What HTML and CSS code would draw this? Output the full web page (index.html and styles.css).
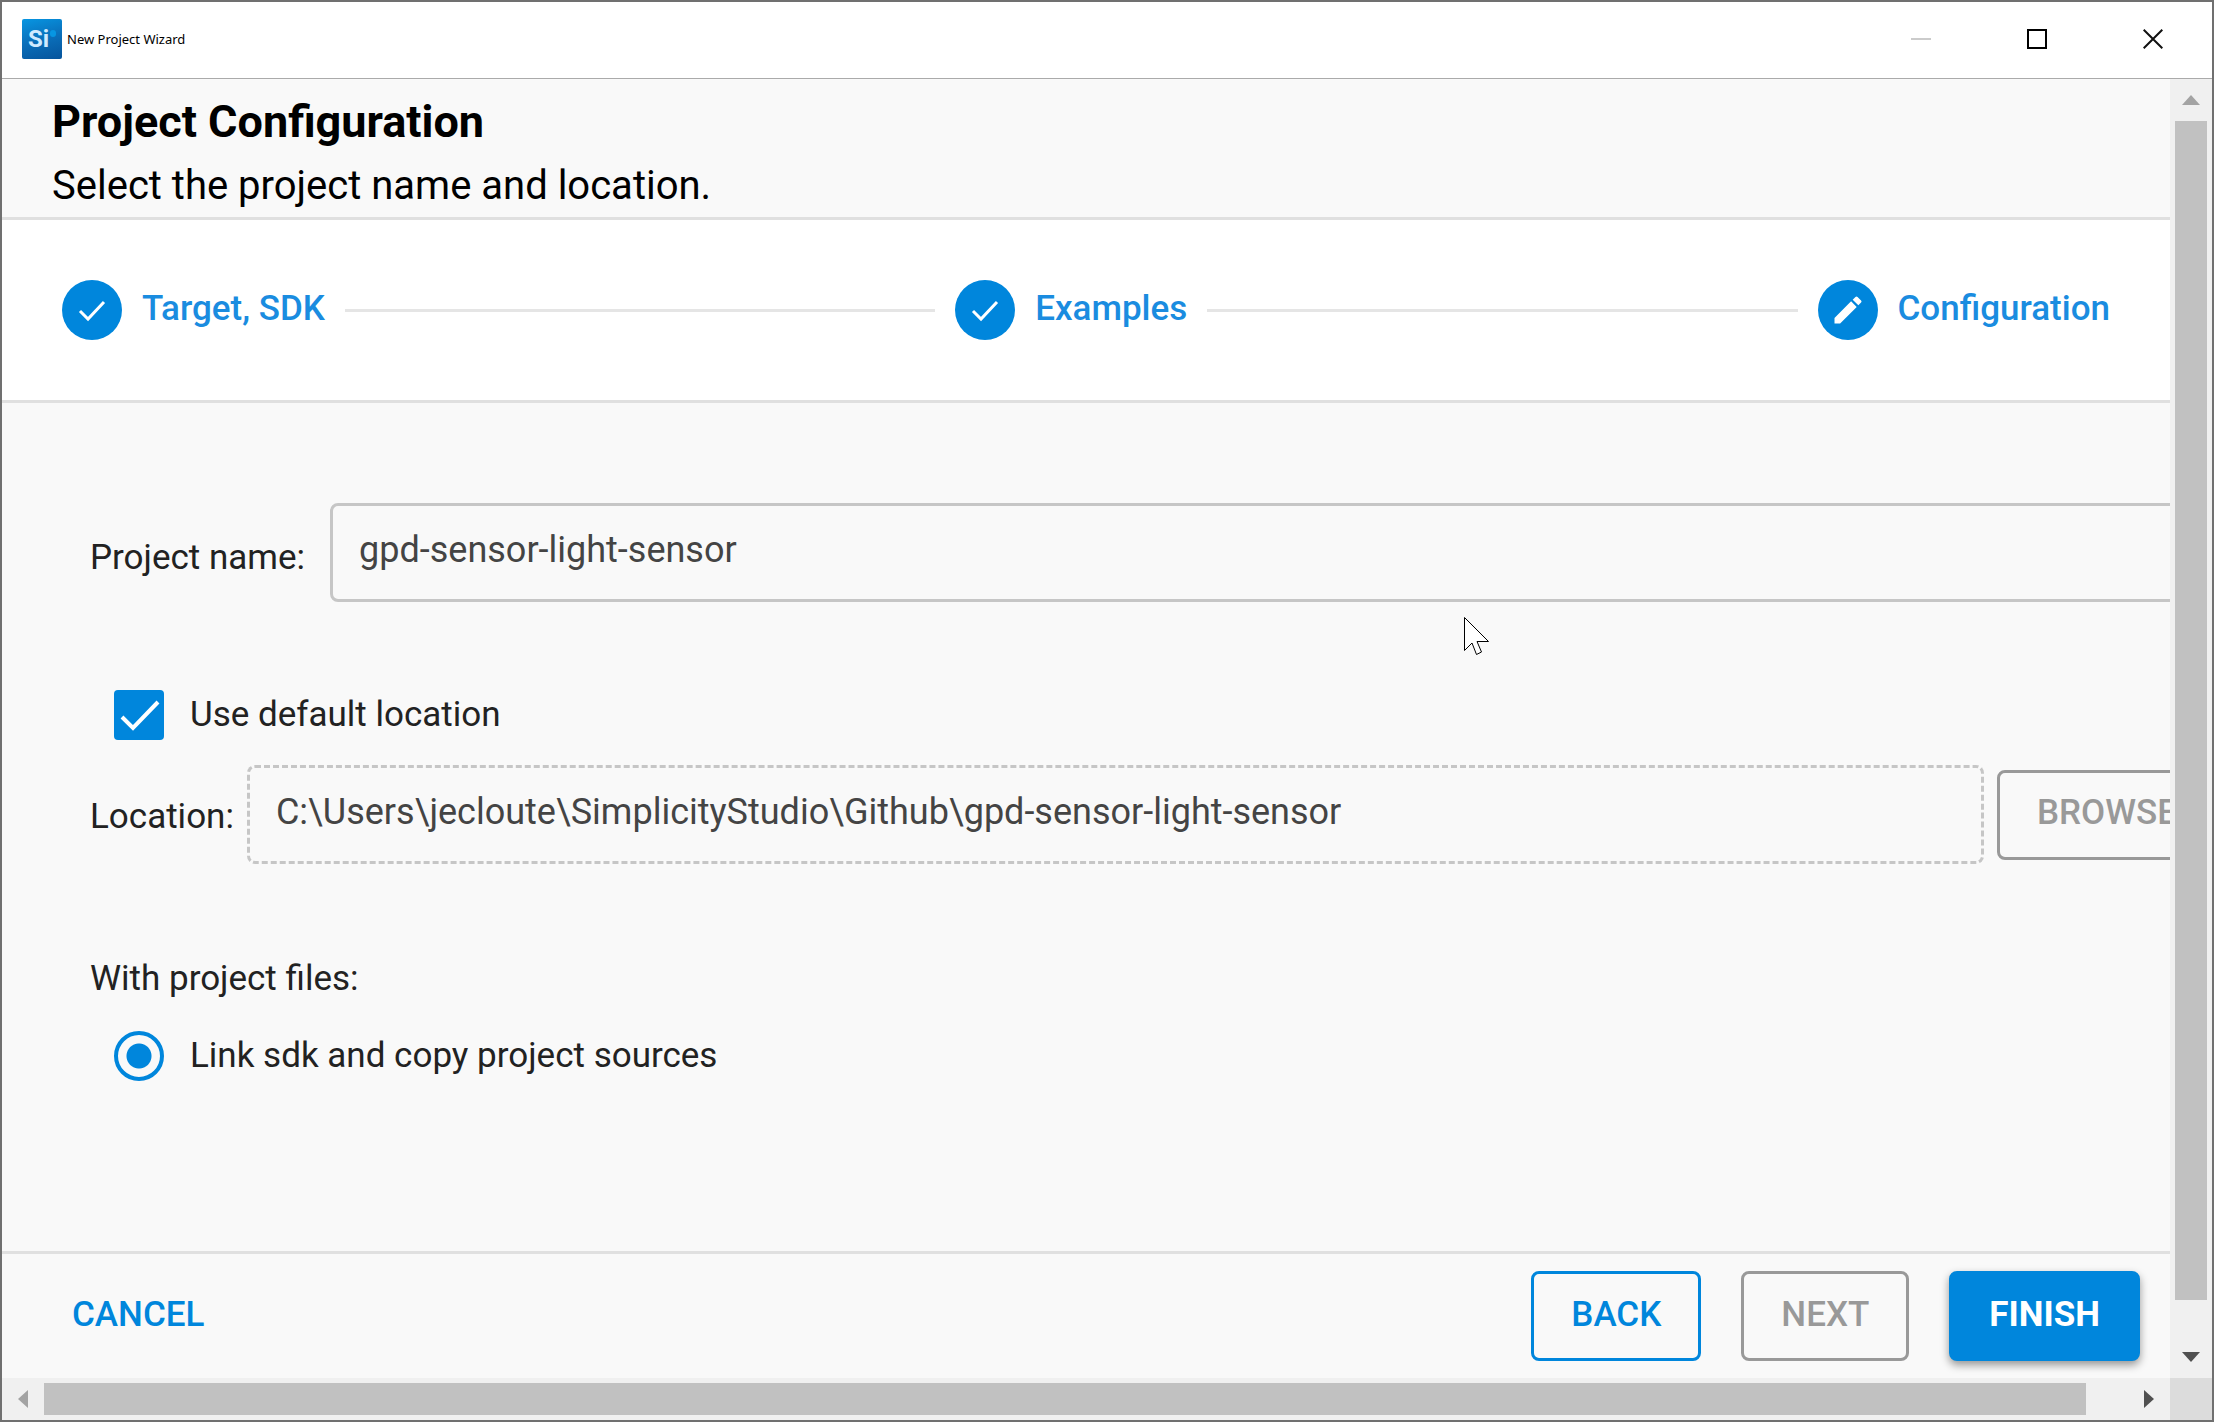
FILE: index.html
```html
<!DOCTYPE html>
<html lang="en">
<head>
<meta charset="utf-8">
<title>New Project Wizard</title>
<link rel="stylesheet" href="styles.css">
</head>
<body>
<div class="window">
  <header class="titlebar">
    <span class="logo" aria-hidden="true">Si<i class="logo-dot"></i></span>
    <span class="window-title">New Project Wizard</span>
    <div class="window-controls">
      <button class="control" type="button" aria-label="Minimize" disabled>
        <svg width="20" height="20" viewBox="0 0 20 20"><path d="M0 10H20" stroke="#cbcbcb" stroke-width="2"/></svg>
      </button>
      <button class="control" type="button" aria-label="Maximize">
        <svg width="20" height="20" viewBox="0 0 20 20"><rect x="1" y="1" width="18" height="18" fill="none" stroke="#000" stroke-width="2"/></svg>
      </button>
      <button class="control" type="button" aria-label="Close">
        <svg width="20" height="20" viewBox="0 0 20 20"><path d="M.7.7 19.3 19.3M19.3.7.7 19.3" stroke="#111" stroke-width="2"/></svg>
      </button>
    </div>
  </header>

  <div class="client">
    <main class="viewport">
      <section class="heading">
        <h1>Project Configuration</h1>
        <p>Select the project name and location.</p>
      </section>

      <ol class="stepper">
        <li class="step">
          <span class="step-icon"><svg width="30" height="30" viewBox="0 0 30 30"><path d="M3 16 11 24 27 7" fill="none" stroke="#fff" stroke-width="3"/></svg></span>
          <span class="step-label">Target, SDK</span>
        </li>
        <li class="step-line" aria-hidden="true"></li>
        <li class="step">
          <span class="step-icon"><svg width="30" height="30" viewBox="0 0 30 30"><path d="M3 16 11 24 27 7" fill="none" stroke="#fff" stroke-width="3"/></svg></span>
          <span class="step-label">Examples</span>
        </li>
        <li class="step-line" aria-hidden="true"></li>
        <li class="step" aria-current="step">
          <span class="step-icon"><svg width="36" height="36" viewBox="0 0 24 24"><path fill="#fff" d="M3 17.25V21h3.75L17.81 9.94l-3.75-3.75L3 17.25zM20.71 7.04a1 1 0 0 0 0-1.41l-2.34-2.34a1 1 0 0 0-1.41 0l-1.83 1.83 3.75 3.75 1.83-1.83z"/></svg></span>
          <span class="step-label">Configuration</span>
        </li>
      </ol>

      <form class="form" id="project-form">
        <div class="field project-field">
          <label for="project-name">Project name:</label>
          <input class="text-input" id="project-name" type="text" value="gpd-sensor-light-sensor">
        </div>
        <label class="choice default-choice">
          <input class="checkbox" type="checkbox" checked>
          <span>Use default location</span>
        </label>
        <div class="field location-field">
          <label for="location">Location:</label>
          <input class="text-input dashed" id="location" type="text" value="C:\Users\jecloute\SimplicityStudio\Github\gpd-sensor-light-sensor" readonly>
          <button class="button" type="button" disabled>BROWSE</button>
        </div>
        <fieldset class="files">
          <legend>With project files:</legend>
          <label class="choice">
            <input class="radio" type="radio" name="files" checked>
            <span>Link sdk and copy project sources</span>
          </label>
        </fieldset>
      </form>

      <footer class="actions">
        <button class="button text-button" type="button">CANCEL</button>
        <div class="action-group">
          <button class="button outlined" type="button">BACK</button>
          <button class="button" type="button" disabled>NEXT</button>
          <button class="button filled" type="submit" form="project-form">FINISH</button>
        </div>
      </footer>
    </main>

    <div class="scrollbar vertical" aria-hidden="true">
      <span class="arrow up"></span>
      <span class="track"><i class="thumb"></i></span>
      <span class="arrow down"></span>
    </div>
    <div class="scrollbar horizontal" aria-hidden="true">
      <span class="arrow left"></span>
      <span class="track"><i class="thumb"></i></span>
      <span class="arrow right"></span>
    </div>
    <div class="corner"></div>
  </div>

  <svg class="cursor" width="30" height="42" viewBox="0 0 30 42" aria-hidden="true"><path d="M3.500 3.500V36.500L11 29 15.500 40.500 20.500 38 16 27.500H27.500Z" fill="#fff" stroke="#000" stroke-width="1"/></svg>
</div>
</body>
</html>
```

FILE: styles.css
```css
:root {
  --blue: #0086dc;
  --surface: #f9f9f9;
  --line: #e0e0e0;
  --disabled: #999;
}

* { box-sizing: border-box; }

body {
  margin: 0;
  font: 35px/42px Roboto, sans-serif;
  color: #222;
}

button, input { font: inherit; }

.window {
  position: relative;
  display: flex;
  flex-direction: column;
  min-height: 100vh;
  border: 2px solid #707070;
  background: var(--surface);
}

.titlebar {
  display: flex;
  align-items: center;
  height: 77px;
  padding: 0 1px 2px 20px;
  border-bottom: 1px solid #aaa;
  background: #fff;
}

.logo {
  display: flex;
  justify-content: center;
  gap: 1px;
  width: 40px;
  height: 40px;
  border-radius: 2px;
  background: linear-gradient(165deg, #0796e2, #0a6fba 50%, #06549c);
  color: #cfeaff;
  font: bold 24px/41px Roboto, sans-serif;
}

.logo-dot {
  width: 6px;
  height: 7px;
  margin-top: 11px;
  border-radius: 3px;
  background: #0796e2;
}

.window-title {
  margin-left: 5px;
  color: #000;
  font: 13px/20px "Noto Sans", sans-serif;
}

.window-controls {
  display: flex;
  margin-left: auto;
}

.control {
  display: flex;
  align-items: center;
  justify-content: center;
  width: 116px;
  height: 74px;
  padding: 0;
  border: 0;
  background: none;
}

.client {
  flex: 1;
  display: grid;
  grid-template: minmax(0, 1fr) 42px / minmax(0, 1fr) 42px;
}

.viewport {
  display: flex;
  flex-direction: column;
  overflow: hidden;
}

.heading {
  padding: 11px 50px 0;
  border-bottom: 3px solid var(--line);
  color: #000;
}

.heading h1 {
  margin: 0;
  font-size: 45px;
  line-height: 64px;
  font-weight: 700;
}

.heading p {
  margin: 0;
  font-size: 40px;
  line-height: 63px;
}

.stepper {
  display: flex;
  align-items: center;
  gap: 20px;
  margin: 0;
  padding: 60px;
  border-bottom: 3px solid var(--line);
  background: #fff;
  list-style: none;
}

.step {
  display: flex;
  align-items: center;
  gap: 20px;
  color: #1a8ce0;
  font-weight: 500;
}

.step-icon {
  display: flex;
  align-items: center;
  justify-content: center;
  width: 60px;
  height: 60px;
  border-radius: 50%;
  background: var(--blue);
}

.step-label { padding-bottom: 3px; }

.step-line {
  flex: 1;
  height: 3px;
  background: #e5e5e5;
}

.form {
  flex: 1;
  width: calc(100% + 47px);
  padding: 100px 0 90px 88px;
}

.field {
  display: flex;
  align-items: center;
}

.project-field { gap: 25px; }

.location-field { gap: 13px; }

.field label { padding-top: 11px; }

.location-field label { padding-top: 4px; }

.text-input {
  flex: 1;
  min-width: 0;
  height: 99px;
  padding: 0 26px 6px;
  border: 3px solid #c6c6c6;
  border-radius: 8px;
  outline: 0;
  background: transparent;
  color: #444;
  font-size: 36px;
}

.text-input.dashed { border-style: dashed; }

.choice {
  display: flex;
  align-items: center;
  gap: 26px;
  height: 50px;
  padding-left: 24px;
}

.default-choice { margin: 88px 0 25px; }

.checkbox, .radio {
  appearance: none;
  width: 50px;
  height: 50px;
  margin: 0;
}

.checkbox {
  border-radius: 4px;
  background: var(--blue) url("data:image/svg+xml,%3Csvg xmlns='http://www.w3.org/2000/svg' viewBox='0 0 50 50'%3E%3Cpath d='M8 27 19 38 44 12' fill='none' stroke='white' stroke-width='4'/%3E%3C/svg%3E");
}

.radio {
  border: 4px solid var(--blue);
  border-radius: 50%;
  background: radial-gradient(circle, var(--blue) 12px, transparent 13px);
}

.files {
  margin: 94px 0 0;
  padding: 0;
  border: 0;
}

.files legend {
  margin-bottom: 31px;
  padding: 0;
}

.button {
  height: 90px;
  padding: 0 37px 3px;
  border: 3px solid var(--disabled);
  border-radius: 8px;
  background: transparent;
  color: var(--disabled);
  font-weight: 500;
}

.button.outlined {
  border-color: var(--blue);
  color: var(--blue);
}

.button.filled {
  border-color: var(--blue);
  background: var(--blue);
  box-shadow: 0 4px 8px rgba(0, 0, 0, .4);
  color: #fff;
  font-weight: 700;
}

.button.text-button {
  border-color: transparent;
  color: var(--blue);
}

.actions {
  display: flex;
  justify-content: space-between;
  padding: 17px 30px;
  border-top: 3px solid var(--line);
}

.action-group {
  display: flex;
  gap: 40px;
}

.scrollbar {
  display: flex;
  background: #f0f0f0;
}

.scrollbar.vertical {
  flex-direction: column;
  padding: 0 5px;
}

.scrollbar.horizontal { padding: 5px 0; }

.track {
  flex: 1;
  display: flex;
}

.vertical .track { flex-direction: column; }

.thumb {
  flex-basis: 97%;
  background: #c1c1c1;
}

.horizontal .thumb { flex-basis: 98%; }

.arrow {
  display: flex;
  align-items: center;
  justify-content: center;
  width: 42px;
  color: #505050;
}

.vertical .arrow {
  width: auto;
  height: 42px;
}

.arrow::before {
  content: "";
  width: 18px;
  height: 10px;
  background: currentColor;
}

.up, .left { color: #a3a3a3; }

.left::before, .right::before {
  width: 10px;
  height: 18px;
}

.up::before { clip-path: polygon(50% 0, 100% 100%, 0 100%); }
.down::before { clip-path: polygon(0 0, 100% 0, 50% 100%); }
.left::before { clip-path: polygon(0 50%, 100% 0, 100% 100%); }
.right::before { clip-path: polygon(0 0, 100% 50%, 0 100%); }

.corner { background: #dcdcdc; }

/* The pointer floats over the form. */
.cursor {
  position: absolute;
  top: 612px;
  left: 1459px;
}
```
